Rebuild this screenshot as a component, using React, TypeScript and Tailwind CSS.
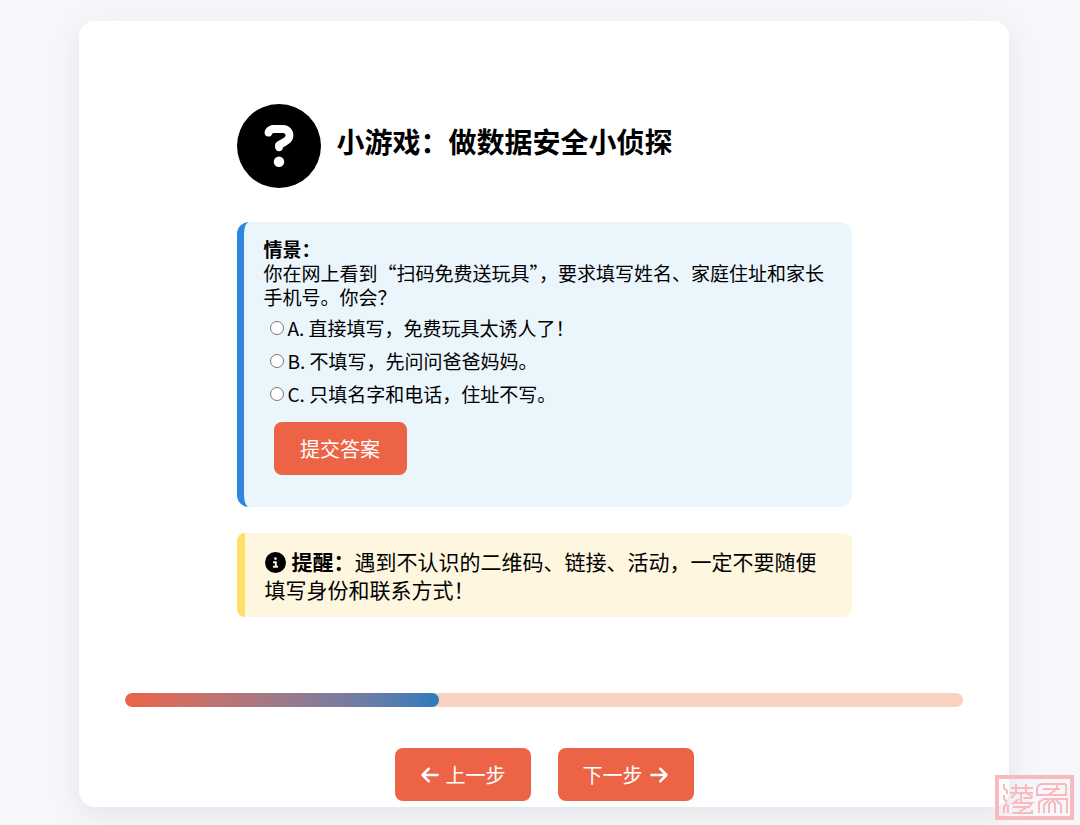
import React, { useState } from 'react';
import { FaArrowLeft, FaArrowRight, FaCircleInfo, FaCircleQuestion } from 'react-icons/fa6';

const TOTAL_STEPS = 8;

const options = [
  { value: 'A', label: 'A. 直接填写，免费玩具太诱人了！' },
  { value: 'B', label: 'B. 不填写，先问问爸爸妈妈。' },
  { value: 'C', label: 'C. 只填名字和电话，住址不写。' },
];

const buttonClass =
  'inline-flex h-[53px] items-center justify-center rounded-lg bg-[#ec6346] text-xl text-white hover:bg-[#d9553a]';

const Quiz = () => {
  const [answer, setAnswer] = useState('');

  return (
    <form
      className="mt-[34px] rounded-xl border-l-[7px] border-[#2e86de] bg-[#eaf5fc] pt-[15px] pr-4 pb-8 pl-5 text-[19px] leading-6"
      onSubmit={(e) => e.preventDefault()}
    >
      <p>
        <strong>情景：</strong>
        <br />
        你在网上看到“扫码免费送玩具”，要求填写姓名、家庭住址和家长手机号。你会？
      </p>
      <div className="mt-0.5">
        {options.map((option) => (
          <label key={option.value} className="flex h-[33px] items-center gap-1 pl-1.5">
            <input
              type="radio"
              name="answer"
              value={option.value}
              checked={answer === option.value}
              onChange={() => setAnswer(option.value)}
              className="h-3.5 w-3.5"
            />
            {option.label}
          </label>
        ))}
      </div>
      <button type="submit" className={`${buttonClass} mt-3 ml-2.5 w-[133px]`}>
        提交答案
      </button>
    </form>
  );
};

const Seal = () => (
  <svg
    className="absolute right-1.5 bottom-[5px] h-[45px] w-[79px]"
    viewBox="0 0 79 45"
    fill="none"
    stroke="#fab9bc"
    strokeWidth="2"
    aria-hidden="true"
  >
    <rect x="2" y="2" width="75" height="41" strokeWidth="4" />
    {/* left character */}
    <path d="M9 9v4l3 3v3M9 20v4l3 3M9 38v-6l3-3M13 38v-8M16 13h22M21 9v9l-5 5M31 9v9l7 4M15 18h23M26 18v9M17 29l7-5M28 23h9M20 28h17l-3 4H18M32 32l-8 5M17 38h20v-3" />
    {/* right character */}
    <path d="M71 9H48c-4 0-6 2-6 5v6h29V9M48 14h17M62 9v5l-9 6M44 38V27l5-3h23v14M49 38V30l5-5M54 38v-9l4-4M60 38v-9l-2-4M66 38v-8l-5-5" />
  </svg>
);

export default function App() {
  const [step, setStep] = useState(3);

  return (
    <div className="relative min-h-screen bg-[#f5f7fb] pt-[21px] pr-[71px] pb-[18px] pl-[79px] font-['Noto_Sans_CJK_SC',sans-serif] text-black">
      <main className="rounded-2xl bg-white px-[46px] pt-[83px] pb-1.5 shadow-[0_8px_32px_rgba(0,0,0,0.08)]">
        <section className="mx-auto max-w-[615px]">
          <header className="flex items-center gap-4">
            <FaCircleQuestion className="h-[84px] w-[84px] shrink-0" />
            <h1 className="pb-2.5 text-[28px] leading-9 font-bold">小游戏：做数据安全小侦探</h1>
          </header>

          <Quiz />

          <div className="mt-[26px] rounded-lg border-l-8 border-[#ffdf65] bg-[#fff6e0] py-3.5 pr-5 pl-5 text-[21px] leading-7">
            <FaCircleInfo className="mr-1.5 inline h-[21px] w-[21px] align-[-3px]" />
            <strong>提醒：</strong>
            遇到不认识的二维码、链接、活动，一定不要随便填写身份和联系方式！
          </div>
        </section>

        <div className="mt-[76px] h-3.5 overflow-hidden rounded-full bg-[#f8d1c0]">
          <div
            className="h-full rounded-full bg-linear-to-r from-[#ec6346] to-[#2a7bbd]"
            style={{ width: `${(step / TOTAL_STEPS) * 100}%` }}
          />
        </div>

        <nav className="mt-[41px] flex justify-center gap-[27px]">
          <button
            type="button"
            className={`${buttonClass} w-[136px] gap-1.5`}
            onClick={() => setStep(Math.max(1, step - 1))}
          >
            <FaArrowLeft />
            上一步
          </button>
          <button
            type="button"
            className={`${buttonClass} w-[136px] gap-1.5`}
            onClick={() => setStep(Math.min(TOTAL_STEPS, step + 1))}
          >
            下一步
            <FaArrowRight />
          </button>
        </nav>
      </main>
      <Seal />
    </div>
  );
}
